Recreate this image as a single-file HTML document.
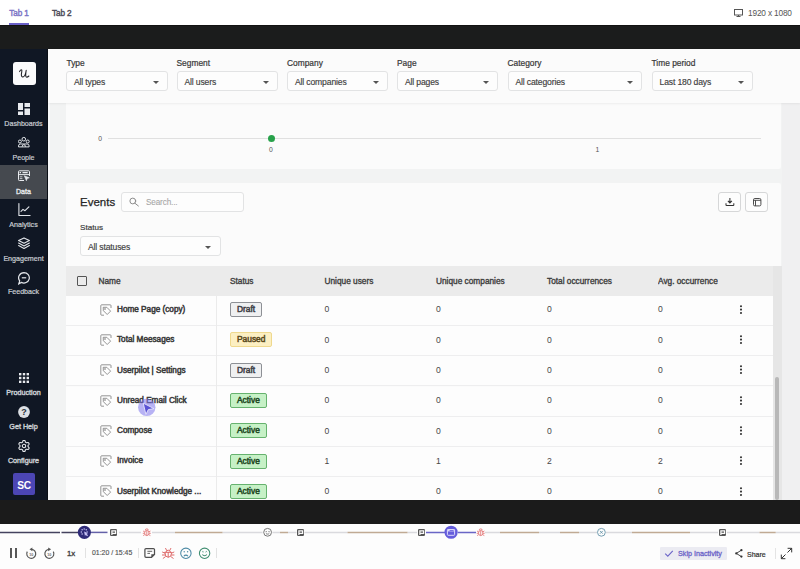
<!DOCTYPE html>
<html><head><meta charset="utf-8">
<style>
*{box-sizing:border-box}
html,body{margin:0;padding:0}
body{width:800px;height:569px;position:relative;overflow:hidden;background:#fff;font-family:"Liberation Sans",sans-serif;color:#333}
.a{position:absolute}
.t{position:absolute;white-space:nowrap;line-height:1}
.nav{position:absolute;left:0;width:47px;text-align:center;color:#c9cdd3;-webkit-text-stroke:0.2px #c9cdd3;font-size:7.1px;line-height:1;white-space:nowrap}
.lbl{position:absolute;font-size:8.4px;-webkit-text-stroke:0.2px #383838;color:#383838;line-height:1;white-space:nowrap}
.dd{position:absolute;top:71px;height:20px;border:1px solid #e2e3e4;border-radius:3px;background:#fdfdfd}
.dd span{position:absolute;left:7px;top:5.5px;font-size:8.6px;letter-spacing:-0.15px;line-height:1;color:#404040;-webkit-text-stroke:0.15px #404040;white-space:nowrap}
.dd i{position:absolute;right:8px;top:8.5px;width:0;height:0;border-left:3px solid transparent;border-right:3px solid transparent;border-top:3px solid #555}
.th{position:absolute;top:276.8px;font-size:8.3px;-webkit-text-stroke:0.35px #3d3d3d;color:#3d3d3d;line-height:1;white-space:nowrap}
.row{position:absolute;left:66px;width:706.5px;height:30.3px;border-bottom:1px solid #eeeeef;background:#fdfdfd}
.nm{position:absolute;left:51px;top:10.4px;font-size:8.2px;-webkit-text-stroke:0.5px #3a3a3a;color:#3a3a3a;line-height:1;white-space:nowrap}
.ic{position:absolute;left:34px;top:8px}
.pill{position:absolute;left:164px;top:6.5px;height:15px;border:1px solid #8d9095;border-radius:2px;background:#eff0f1;font-size:8.4px;-webkit-text-stroke:0.5px currentColor;color:#3e4146;line-height:13px;padding:0 6px;white-space:nowrap}
.pill.p{background:#fcefc2;border-color:#efd98e;color:#5b4b1d}
.pill.ac{background:#c6f1c6;border-color:#66b26e;color:#1f4a24}
.num{position:absolute;top:9.9px;font-size:8.6px;color:#474747;line-height:1}
.keb{position:absolute;left:672.7px;top:9.2px;fill:#333}
.keb b{position:absolute;left:0;width:1.7px;height:1.7px;border-radius:1px;background:#3a3a3a}
</style></head><body>

<!-- TOP BAR -->
<div class="t" style="left:9.3px;top:10px;font-size:8.2px;letter-spacing:-0.12px;-webkit-text-stroke:0.4px #7c74c6;color:#7c74c6">Tab 1</div>
<div class="a" style="left:9px;top:23px;width:20px;height:2px;background:#6a60c8"></div>
<div class="t" style="left:52px;top:10px;font-size:8.2px;letter-spacing:-0.12px;-webkit-text-stroke:0.4px #4d4b57;color:#4d4b57">Tab 2</div>
<svg class="a" style="left:734px;top:9px" width="9" height="8" viewBox="0 0 9 8"><rect x="0.5" y="0.5" width="8" height="5.5" fill="none" stroke="#555" stroke-width="1"/><path d="M4.5 6v1.3M2.5 7.5h4" stroke="#555" stroke-width="1"/></svg>
<div class="t" style="left:748px;top:9px;font-size:8.3px;letter-spacing:-0.17px;color:#555">1920 x 1080</div>

<!-- DARK BANDS -->
<div class="a" style="left:0;top:25px;width:800px;height:24px;background:#1b1c1c;border-top:1px solid #121212"></div>
<div class="a" style="left:0;top:500px;width:800px;height:24px;background:#1b1b1b"></div>

<!-- SIDEBAR -->
<div class="a" style="left:0;top:49px;width:48px;height:451px;background:#101724"></div>
<div class="a" style="left:47px;top:49px;width:1px;height:451px;background:#0b0f16"></div>
<div class="a" style="left:12.5px;top:62px;width:23px;height:23px;background:#fbfbfc;border-radius:3px"></div>
<svg class="a" style="left:18.5px;top:69px" width="11" height="10" viewBox="0 0 11 10"><path d="M.6 2.6C1.1 1.2 2 .6 2.7 1c.5.4-.1 2.4-.3 4-.2 1.8.4 3.1 1.6 2.9 1.4-.2 2.6-2.4 3.2-6.6-.3 1.9-.7 4.3-.4 5.9.3 1.2 1.4 1.3 3.1-.2" fill="none" stroke="#1f1f24" stroke-width="1.05" stroke-linecap="round" stroke-linejoin="round"/></svg>

<div class="a" style="left:0;top:165px;width:47px;height:34px;background:#45494f"></div>

<!-- dashboards icon -->
<svg class="a" style="left:18px;top:102.5px" width="12" height="12" viewBox="0 0 12 12" fill="#e8eaee"><rect x="0" y="0" width="5" height="7"/><rect x="6.5" y="0" width="5.5" height="4"/><rect x="0" y="8.5" width="5" height="3.5"/><rect x="6.5" y="5.5" width="5.5" height="6.5"/></svg>
<div class="nav" style="top:120.6px">Dashboards</div>
<!-- people -->
<svg class="a" style="left:18px;top:136px" width="12" height="12" viewBox="0 0 12 12" fill="none" stroke="#e3e6ea" stroke-width="1"><circle cx="5.8" cy="3.2" r="1.8"/><circle cx="1.9" cy="5.5" r="1.5"/><circle cx="9.7" cy="5.5" r="1.5"/><path d="M.5 10.9V9.9a1.9 1.9 0 0 1 1.9-1.9h6.8a1.9 1.9 0 0 1 1.9 1.9v1z"/><path d="M4.2 10.9v-.6a1.6 1.6 0 0 1 3.2 0v.6"/></svg>
<div class="nav" style="top:154.6px">People</div>
<!-- data -->
<svg class="a" style="left:18px;top:170px" width="12" height="12" viewBox="0 0 12 12" fill="none" stroke="#e8eaee" stroke-width="1"><path d="M6 10.5H1.3a.8.8 0 0 1-.8-.8V1.6a.8.8 0 0 1 .8-.8h9.4a.8.8 0 0 1 .8.8V6"/><path d="M.5 4.6h11"/><path d="M1.6 2.7h1.4M4.5 2.7h5.2" stroke-width="1.3"/><path d="M1.8 6.8h2.6M1.8 8.6h2.6" stroke-width=".8"/><path d="M6.3 5.8l5 2-2.1.8-.8 2.1z" fill="#e8eaee" stroke-width=".6"/></svg>
<div class="nav" style="top:188.5px;color:#e6e8eb;-webkit-text-stroke:0.35px #e6e8eb">Data</div>
<!-- analytics -->
<svg class="a" style="left:17.5px;top:203px" width="13" height="13" viewBox="0 0 13 13" fill="none" stroke="#e3e6ea" stroke-width="1.1" stroke-linecap="round" stroke-linejoin="round"><path d="M.9 .6v11.9h11.2"/><path d="M3 8.3l2-1.9 2 1.3 3.9-3.8"/></svg>
<div class="nav" style="top:221.8px">Analytics</div>
<!-- engagement -->
<svg class="a" style="left:18px;top:237.3px" width="12" height="12" viewBox="0 0 12 12" fill="none" stroke="#e3e6ea" stroke-width="1.1" stroke-linejoin="round" stroke-linecap="round"><path d="M6 .9L11.4 3.6 6 6.3.6 3.6z"/><path d="M.6 6L6 8.9 11.4 6"/><path d="M.6 8.5L6 11.4l5.4-2.9"/></svg>
<div class="nav" style="top:255.5px">Engagement</div>
<!-- feedback -->
<svg class="a" style="left:18px;top:271.5px" width="12" height="13" viewBox="0 0 12 13" fill="none" stroke="#e3e6ea" stroke-width="1.2"><path d="M6 .6a5.4 5.2 0 1 1-2.6 9.8L.8 11.8l.9-2.9A5.4 5.2 0 0 1 6 .6z"/><path d="M3.8 5.8h4.4"/></svg>
<div class="nav" style="top:288.9px">Feedback</div>

<!-- production -->
<svg class="a" style="left:19px;top:373px" width="10" height="10" viewBox="0 0 10 10" fill="#e8eaee"><rect x="0" y="0" width="2.4" height="2.4"/><rect x="3.8" y="0" width="2.4" height="2.4"/><rect x="7.6" y="0" width="2.4" height="2.4"/><rect x="0" y="3.8" width="2.4" height="2.4"/><rect x="3.8" y="3.8" width="2.4" height="2.4"/><rect x="7.6" y="3.8" width="2.4" height="2.4"/><rect x="0" y="7.6" width="2.4" height="2.4"/><rect x="3.8" y="7.6" width="2.4" height="2.4"/><rect x="7.6" y="7.6" width="2.4" height="2.4"/></svg>
<div class="nav" style="top:389.1px;-webkit-text-stroke:0.4px #c9cdd3;font-size:7.2px">Production</div>
<!-- help -->
<svg class="a" style="left:17.8px;top:406.2px" width="12" height="12" viewBox="0 0 12 12"><circle cx="6" cy="6" r="5.9" fill="#dcdfe4"/><text x="6" y="9.3" text-anchor="middle" font-family="Liberation Sans" font-weight="bold" font-size="9" fill="#2a2f38">?</text></svg>
<div class="nav" style="top:422.8px;-webkit-text-stroke:0.4px #c9cdd3;font-size:7.2px">Get Help</div>
<!-- configure -->
<svg class="a" style="left:18px;top:439.6px" width="12" height="12" viewBox="0 0 12 12" fill="none" stroke="#e3e6ea" stroke-width="1.1" stroke-linejoin="round"><path d="M6.00 0.43 L6.19 0.43 L6.39 0.45 L6.58 0.49 L6.77 0.56 L6.94 0.67 L7.09 0.87 L7.20 1.18 L7.28 1.54 L7.35 1.85 L7.43 2.06 L7.54 2.20 L7.65 2.29 L7.77 2.37 L7.89 2.44 L8.01 2.51 L8.14 2.58 L8.26 2.65 L8.39 2.71 L8.53 2.77 L8.69 2.79 L8.92 2.76 L9.22 2.67 L9.57 2.55 L9.89 2.49 L10.14 2.52 L10.33 2.62 L10.48 2.74 L10.61 2.89 L10.72 3.05 L10.82 3.21 L10.92 3.39 L11.00 3.56 L11.06 3.75 L11.10 3.94 L11.08 4.15 L10.98 4.38 L10.77 4.63 L10.50 4.88 L10.26 5.09 L10.13 5.27 L10.06 5.43 L10.04 5.58 L10.03 5.72 L10.03 5.86 L10.03 6.00 L10.03 6.14 L10.03 6.28 L10.04 6.42 L10.06 6.57 L10.13 6.73 L10.26 6.91 L10.50 7.12 L10.77 7.37 L10.98 7.62 L11.08 7.85 L11.10 8.06 L11.06 8.25 L11.00 8.44 L10.92 8.61 L10.82 8.79 L10.72 8.95 L10.61 9.11 L10.48 9.26 L10.33 9.38 L10.14 9.48 L9.89 9.51 L9.57 9.45 L9.22 9.33 L8.92 9.24 L8.69 9.21 L8.53 9.23 L8.39 9.29 L8.26 9.35 L8.14 9.42 L8.01 9.49 L7.89 9.56 L7.77 9.63 L7.65 9.71 L7.54 9.80 L7.43 9.94 L7.35 10.15 L7.28 10.46 L7.20 10.82 L7.09 11.13 L6.94 11.33 L6.77 11.44 L6.58 11.51 L6.39 11.55 L6.19 11.57 L6.00 11.57 L5.81 11.57 L5.61 11.55 L5.42 11.51 L5.23 11.44 L5.06 11.33 L4.91 11.13 L4.80 10.82 L4.72 10.46 L4.65 10.15 L4.57 9.94 L4.46 9.80 L4.35 9.71 L4.23 9.63 L4.11 9.56 L3.99 9.49 L3.86 9.42 L3.74 9.35 L3.61 9.29 L3.47 9.23 L3.31 9.21 L3.08 9.24 L2.78 9.33 L2.43 9.45 L2.11 9.51 L1.86 9.48 L1.67 9.38 L1.52 9.26 L1.39 9.11 L1.28 8.95 L1.18 8.79 L1.08 8.61 L1.00 8.44 L0.94 8.25 L0.90 8.06 L0.92 7.85 L1.02 7.62 L1.23 7.37 L1.50 7.12 L1.74 6.91 L1.87 6.73 L1.94 6.57 L1.96 6.42 L1.97 6.28 L1.97 6.14 L1.97 6.00 L1.97 5.86 L1.97 5.72 L1.96 5.58 L1.94 5.43 L1.87 5.27 L1.74 5.09 L1.50 4.88 L1.23 4.63 L1.02 4.38 L0.92 4.15 L0.90 3.94 L0.94 3.75 L1.00 3.56 L1.08 3.39 L1.18 3.21 L1.28 3.05 L1.39 2.89 L1.52 2.74 L1.67 2.62 L1.86 2.52 L2.11 2.49 L2.43 2.55 L2.78 2.67 L3.08 2.76 L3.31 2.79 L3.47 2.77 L3.61 2.71 L3.74 2.65 L3.86 2.58 L3.99 2.51 L4.11 2.44 L4.23 2.37 L4.35 2.29 L4.46 2.20 L4.57 2.06 L4.65 1.85 L4.72 1.54 L4.80 1.18 L4.91 0.87 L5.06 0.67 L5.23 0.56 L5.42 0.49 L5.61 0.45 L5.81 0.43Z"/><circle cx="6" cy="6" r="1.7"/></svg>
<div class="nav" style="top:456.6px;-webkit-text-stroke:0.4px #c9cdd3;font-size:7.2px">Configure</div>
<!-- avatar -->
<div class="a" style="left:12.8px;top:472.8px;width:22.4px;height:22.4px;background:#4c46b4;border-radius:2px"></div>
<div class="t" style="left:12.8px;top:480.6px;width:22.4px;text-align:center;font-size:10.2px;letter-spacing:-0.4px;font-weight:bold;color:#fff">SC</div>

<!-- CONTENT -->
<div class="a" style="left:48px;top:49px;width:752px;height:451px;background:#f2f3f3"></div>
<div class="a" style="left:48px;top:102px;width:2px;height:398px;background:#f8f9fa"></div>
<div class="a" style="left:782px;top:102px;width:18px;height:398px;background:#f0f0f1"></div>

<!-- chart card -->
<div class="a" style="left:66px;top:95px;width:715px;height:74px;background:#fbfbfb;border-radius:2px"></div>
<div class="t" style="left:98.3px;top:135.6px;font-size:6.8px;color:#555">0</div>
<div class="a" style="left:107.8px;top:138px;width:653.2px;height:1px;background:#e0e0e0"></div>
<div class="a" style="left:267.5px;top:134.5px;width:7px;height:7px;border-radius:50%;background:#27a14a"></div>
<div class="t" style="left:269px;top:146.8px;font-size:6.8px;color:#555">0</div>
<div class="t" style="left:595.5px;top:146.8px;font-size:6.8px;color:#555">1</div>

<!-- filter bar -->
<div class="a" style="left:48px;top:49px;width:752px;height:53.5px;background:#fbfbfb;box-shadow:0 1px 2px rgba(0,0,0,0.06)"></div>
<div class="lbl" style="left:66.5px;top:59px">Type</div>
<div class="lbl" style="left:176.5px;top:59px">Segment</div>
<div class="lbl" style="left:287px;top:59px">Company</div>
<div class="lbl" style="left:397px;top:59px">Page</div>
<div class="lbl" style="left:507.5px;top:59px">Category</div>
<div class="lbl" style="left:651.5px;top:59px">Time period</div>
<div class="dd" style="left:66px;width:102px"><span>All types</span><i></i></div>
<div class="dd" style="left:176.5px;width:101.5px"><span>All users</span><i></i></div>
<div class="dd" style="left:287px;width:101px"><span>All companies</span><i></i></div>
<div class="dd" style="left:397px;width:101px"><span>All pages</span><i></i></div>
<div class="dd" style="left:507.5px;width:134px"><span>All categories</span><i></i></div>
<div class="dd" style="left:651.5px;width:101px"><span>Last 180 days</span><i></i></div>

<!-- events card -->
<div class="a" style="left:66px;top:182.5px;width:715px;height:317.5px;background:#fbfbfb;border-radius:2px"></div>
<div class="t" style="left:80px;top:197px;font-size:11.5px;color:#262626;-webkit-text-stroke:0.25px #262626">Events</div>
<div class="a" style="left:120.5px;top:192px;width:123.5px;height:19.5px;border:1px solid #e2e3e4;border-radius:3px;background:#fdfdfd"></div>
<svg class="a" style="left:129px;top:197px" width="11" height="11" viewBox="0 0 11 11" fill="none" stroke="#8c8c8c" stroke-width="1" stroke-linecap="round"><circle cx="3.8" cy="4" r="2.9"/><path d="M5.9 6.2L9.4 9"/></svg>
<div class="t" style="left:146px;top:199.2px;font-size:8.2px;letter-spacing:-0.15px;color:#a8a8a8;-webkit-text-stroke:0.1px #a8a8a8">Search...</div>
<div class="a" style="left:718px;top:192px;width:22.8px;height:19.5px;border:1px solid #d6d7d8;border-radius:3px;background:#fdfdfd"></div>
<svg class="a" style="left:724.5px;top:197px" width="10" height="10" viewBox="0 0 10 10" fill="none" stroke="#333" stroke-width="1.05"><path d="M4.9 .9v5M2.9 3.9l2 2 2-2M1 6.3v1.6a.6.6 0 0 0 .6.6h6.6a.6.6 0 0 0 .6-.6V6.3"/></svg>
<div class="a" style="left:745.3px;top:192px;width:22.5px;height:19.5px;border:1px solid #d6d7d8;border-radius:3px;background:#fdfdfd"></div>
<svg class="a" style="left:752.5px;top:197.7px" width="9" height="9" viewBox="0 0 9 9" fill="none" stroke="#444" stroke-width=".95"><rect x=".5" y=".5" width="7.4" height="7.4" rx="1.3"/><path d="M.5 2.3h7.4M2.5 2.3v5.6"/></svg>
<div class="lbl" style="left:80px;top:224.4px;font-size:8.1px;-webkit-text-stroke:0.2px #3d3d3d;color:#3d3d3d">Status</div>
<div class="dd" style="left:80px;top:235.8px;width:140.5px"><span style="top:6.2px">All statuses</span><i style="top:9px;right:9px"></i></div>

<!-- table -->
<div class="a" style="left:66px;top:265.5px;width:706.5px;height:30px;background:#ebebeb"></div>
<div class="a" style="left:772.5px;top:265.5px;width:9.5px;height:234.5px;background:#e6e6e6"></div>
<div class="a" style="left:775px;top:377px;width:4px;height:123px;background:#b8b8b8;border-radius:2px"></div>
<div class="a" style="left:77px;top:276px;width:10px;height:10px;border:1.3px solid #555;border-radius:1px"></div>
<div class="th" style="left:98.5px">Name</div>
<div class="th" style="left:230px">Status</div>
<div class="th" style="left:324.5px">Unique users</div>
<div class="th" style="left:436px">Unique companies</div>
<div class="th" style="left:547px">Total occurrences</div>
<div class="a" style="left:658px;top:270px;width:60px;height:20px;overflow:hidden"><div class="th" style="left:0;top:7px">Avg. occurrence</div></div>

<div id="rows">
<div class="row" style="top:295.60px"><svg class="ic" width="12" height="12" viewBox="0 0 12 12" fill="none" stroke="#7a7a7a" stroke-width="0.8"><path d="M4 11.2H1.6a.8.8 0 0 1-.8-.8V1.6a.8.8 0 0 1 .8-.8h8.6a.8.8 0 0 1 .8.8V4"/><path d="M3.2 3.3h3.6l3.8 3.8-3.4 3.4-3.8-3.8z"/><circle cx="5" cy="5" r=".5"/></svg><div class="nm">Home Page (copy)</div><div class="pill ">Draft</div><div class="num" style="left:258.5px">0</div><div class="num" style="left:370px">0</div><div class="num" style="left:481px">0</div><div class="num" style="left:592px">0</div><svg class="keb" width="4" height="10" viewBox="0 0 4 10"><circle cx="2" cy="1.2" r="1.05"/><circle cx="2" cy="4.6" r="1.05"/><circle cx="2" cy="8" r="1.05"/></svg></div>
<div class="row" style="top:325.90px"><svg class="ic" width="12" height="12" viewBox="0 0 12 12" fill="none" stroke="#7a7a7a" stroke-width="0.8"><path d="M4 11.2H1.6a.8.8 0 0 1-.8-.8V1.6a.8.8 0 0 1 .8-.8h8.6a.8.8 0 0 1 .8.8V4"/><path d="M3.2 3.3h3.6l3.8 3.8-3.4 3.4-3.8-3.8z"/><circle cx="5" cy="5" r=".5"/></svg><div class="nm">Total Meesages</div><div class="pill p">Paused</div><div class="num" style="left:258.5px">0</div><div class="num" style="left:370px">0</div><div class="num" style="left:481px">0</div><div class="num" style="left:592px">0</div><svg class="keb" width="4" height="10" viewBox="0 0 4 10"><circle cx="2" cy="1.2" r="1.05"/><circle cx="2" cy="4.6" r="1.05"/><circle cx="2" cy="8" r="1.05"/></svg></div>
<div class="row" style="top:356.20px"><svg class="ic" width="12" height="12" viewBox="0 0 12 12" fill="none" stroke="#7a7a7a" stroke-width="0.8"><path d="M4 11.2H1.6a.8.8 0 0 1-.8-.8V1.6a.8.8 0 0 1 .8-.8h8.6a.8.8 0 0 1 .8.8V4"/><path d="M3.2 3.3h3.6l3.8 3.8-3.4 3.4-3.8-3.8z"/><circle cx="5" cy="5" r=".5"/></svg><div class="nm">Userpilot | Settings</div><div class="pill ">Draft</div><div class="num" style="left:258.5px">0</div><div class="num" style="left:370px">0</div><div class="num" style="left:481px">0</div><div class="num" style="left:592px">0</div><svg class="keb" width="4" height="10" viewBox="0 0 4 10"><circle cx="2" cy="1.2" r="1.05"/><circle cx="2" cy="4.6" r="1.05"/><circle cx="2" cy="8" r="1.05"/></svg></div>
<div class="row" style="top:386.50px"><svg class="ic" width="12" height="12" viewBox="0 0 12 12" fill="none" stroke="#7a7a7a" stroke-width="0.8"><path d="M4 11.2H1.6a.8.8 0 0 1-.8-.8V1.6a.8.8 0 0 1 .8-.8h8.6a.8.8 0 0 1 .8.8V4"/><path d="M3.2 3.3h3.6l3.8 3.8-3.4 3.4-3.8-3.8z"/><circle cx="5" cy="5" r=".5"/></svg><div class="nm">Unread Email Click</div><div class="pill ac">Active</div><div class="num" style="left:258.5px">0</div><div class="num" style="left:370px">0</div><div class="num" style="left:481px">0</div><div class="num" style="left:592px">0</div><svg class="keb" width="4" height="10" viewBox="0 0 4 10"><circle cx="2" cy="1.2" r="1.05"/><circle cx="2" cy="4.6" r="1.05"/><circle cx="2" cy="8" r="1.05"/></svg></div>
<div class="row" style="top:416.80px"><svg class="ic" width="12" height="12" viewBox="0 0 12 12" fill="none" stroke="#7a7a7a" stroke-width="0.8"><path d="M4 11.2H1.6a.8.8 0 0 1-.8-.8V1.6a.8.8 0 0 1 .8-.8h8.6a.8.8 0 0 1 .8.8V4"/><path d="M3.2 3.3h3.6l3.8 3.8-3.4 3.4-3.8-3.8z"/><circle cx="5" cy="5" r=".5"/></svg><div class="nm">Compose</div><div class="pill ac">Active</div><div class="num" style="left:258.5px">0</div><div class="num" style="left:370px">0</div><div class="num" style="left:481px">0</div><div class="num" style="left:592px">0</div><svg class="keb" width="4" height="10" viewBox="0 0 4 10"><circle cx="2" cy="1.2" r="1.05"/><circle cx="2" cy="4.6" r="1.05"/><circle cx="2" cy="8" r="1.05"/></svg></div>
<div class="row" style="top:447.10px"><svg class="ic" width="12" height="12" viewBox="0 0 12 12" fill="none" stroke="#7a7a7a" stroke-width="0.8"><path d="M4 11.2H1.6a.8.8 0 0 1-.8-.8V1.6a.8.8 0 0 1 .8-.8h8.6a.8.8 0 0 1 .8.8V4"/><path d="M3.2 3.3h3.6l3.8 3.8-3.4 3.4-3.8-3.8z"/><circle cx="5" cy="5" r=".5"/></svg><div class="nm">Invoice</div><div class="pill ac">Active</div><div class="num" style="left:258.5px">1</div><div class="num" style="left:370px">1</div><div class="num" style="left:481px">2</div><div class="num" style="left:592px">2</div><svg class="keb" width="4" height="10" viewBox="0 0 4 10"><circle cx="2" cy="1.2" r="1.05"/><circle cx="2" cy="4.6" r="1.05"/><circle cx="2" cy="8" r="1.05"/></svg></div>
<div class="row" style="top:477.40px"><svg class="ic" width="12" height="12" viewBox="0 0 12 12" fill="none" stroke="#7a7a7a" stroke-width="0.8"><path d="M4 11.2H1.6a.8.8 0 0 1-.8-.8V1.6a.8.8 0 0 1 .8-.8h8.6a.8.8 0 0 1 .8.8V4"/><path d="M3.2 3.3h3.6l3.8 3.8-3.4 3.4-3.8-3.8z"/><circle cx="5" cy="5" r=".5"/></svg><div class="nm">Userpilot Knowledge ...</div><div class="pill ac">Active</div><div class="num" style="left:258.5px">0</div><div class="num" style="left:370px">0</div><div class="num" style="left:481px">0</div><div class="num" style="left:592px">0</div><svg class="keb" width="4" height="10" viewBox="0 0 4 10"><circle cx="2" cy="1.2" r="1.05"/><circle cx="2" cy="4.6" r="1.05"/><circle cx="2" cy="8" r="1.05"/></svg></div>
<div class="a" style="left:216px;top:295.5px;width:1px;height:205px;background:#ebebeb"></div>
</div>


<!-- CURSOR -->
<svg class="a" style="left:136px;top:397px" width="22" height="22" viewBox="136 397 22 22">
 <circle cx="146.75" cy="407.3" r="8.7" fill="rgba(126,116,236,0.55)"/>
 <path d="M143.2 403.1L154 408.6 148.3 409.6 145.9 414.4z" fill="#5a52d4" stroke="#e8e6fb" stroke-width="0.9" stroke-linejoin="round"/>
</svg>
<!-- TIMELINE -->
<div class="a" style="left:0;top:500px;width:800px;height:24px;background:#1b1b1b"></div>
<div class="a" style="left:0;top:524px;width:800px;height:45px;background:#fdfdfd"></div>
<svg class="a" style="left:0;top:524px" width="800" height="18" viewBox="0 524 800 18">
 <g stroke-width="1.5" fill="none">
  <path d="M0 532.4H60M61.5 532.4H78" stroke="#45435f"/>
  <path d="M91 532.4H107.5" stroke="#6461a8"/>
  <path d="M119 532.4H141M152 532.4H175M222.5 532.4H262.5M272.5 532.4H280M288 532.4H296.5M304.5 532.4H347.5M407.5 532.4H417M485 532.4H500M539 532.4H560M579 532.4H597M606 532.4H632M690 532.4H718M727 532.4H759.5M775.7 532.4H800" stroke="#dadade"/>
  <path d="M175 532.4H222.5M280 532.4H288M347.5 532.4H407.5M500 532.4H539M560 532.4H579M632 532.4H690M759.5 532.4H775.7" stroke="#c0aa94"/>
  <path d="M426 532.4H445M458 532.4H476" stroke="#6a66c6"/>
 </g>
 <!-- click marker -->
 <circle cx="84.4" cy="532.3" r="6.6" fill="#2e2a78"/>
 <g fill="#c9c4f6"><circle cx="84.20" cy="529.00" r=".75"/><circle cx="82.15" cy="529.85" r=".75"/><circle cx="81.30" cy="531.90" r=".75"/><circle cx="82.15" cy="533.95" r=".75"/><circle cx="86.25" cy="529.85" r=".75"/><circle cx="87.10" cy="531.90" r=".75"/><path d="M84.1 531.6l3.9 1.6-1.5.6 1.5 1.5-.9.9-1.5-1.5-.6 1.5z"/></g>
 <!-- browser marker -->
 <circle cx="451.1" cy="532.25" r="6.6" fill="#645cdc"/>
 <rect x="447.4" y="529.5" width="7.2" height="5.8" rx=".7" fill="none" stroke="#dcd9fa" stroke-width="1"/>
 <rect x="447.4" y="529.5" width="7.2" height="1.9" fill="#dcd9fa"/>
 <rect x="449.6" y="530.1" width="4" height=".8" fill="#6057d8"/>
 <!-- notes -->
 <g id="note">
  <rect x="110" y="528.9" width="7" height="7" rx="1.2" fill="#555"/>
  <path d="M111.9 535.1V530.8h3.7v2.5h-3.7" fill="none" stroke="#fafafa" stroke-width="1.25"/>
 </g>
 <use href="#note" x="187"/>
 <use href="#note" x="308"/>
 <use href="#note" x="609"/>
 <!-- bugs -->
 <g id="bug" fill="none" stroke="#e06a6a" stroke-width=".8">
  <ellipse cx="146.8" cy="533" rx="2.2" ry="2.6"/>
  <path d="M145.2 530.3a1.6 1.4 0 0 1 3.2 0"/>
  <path d="M144.6 531.8l-1.5-.8M144.5 533.3h-1.7M144.7 534.7l-1.5.9M149 531.8l1.5-.8M149.1 533.3h1.7M148.9 534.7l1.5.9M146.8 530.8v4.6"/>
 </g>
 <use href="#bug" x="333.9"/>
 <!-- smiley -->
 <g fill="none" stroke="#6a6a6a" stroke-width=".9">
  <circle cx="267.6" cy="532.3" r="3.9"/>
  <path d="M266.2 531v1.2M269 531v1.2M265.9 533.3c.8 1.1 2.6 1.1 3.4 0"/>
 </g>
 <!-- sad -->
 <g fill="none" stroke="#6593a8" stroke-width=".9">
  <circle cx="601.4" cy="532.3" r="3.9"/>
  <path d="M600 530.9l2.8 2.8M602.8 530.9l-2.8 2.8"/>
 </g>
</svg>

<!-- CONTROLS -->
<div class="a" style="left:10px;top:548.4px;width:1.5px;height:9.8px;background:#585858"></div>
<div class="a" style="left:15px;top:548.4px;width:1.5px;height:9.8px;background:#585858"></div>
<svg class="a" style="left:24px;top:546px" width="32" height="14" viewBox="24 546 32 14">
 <g fill="none" stroke="#555" stroke-width="1.2">
  <path d="M31.3 549.3A4.5 4.5 0 1 1 27.3 551.6"/>
  <path d="M49.3 549.3A4.5 4.5 0 1 0 53.3 551.6"/>
 </g>
 <path d="M32.4 547.4l-2.9 1.9 2.9 1.9z" fill="#555"/>
 <path d="M48.2 547.4l2.9 1.9-2.9 1.9z" fill="#555"/>
 <text x="31.3" y="555.5" font-family="Liberation Sans" font-weight="bold" font-size="3.7" fill="#6a6a6a" text-anchor="middle">10</text>
 <text x="49.3" y="555.5" font-family="Liberation Sans" font-weight="bold" font-size="3.7" fill="#6a6a6a" text-anchor="middle">10</text>
</svg>
<div class="t" style="left:67px;top:549.6px;font-size:7.8px;-webkit-text-stroke:0.35px #444;color:#444">1x</div>
<div class="a" style="left:85px;top:548px;width:1px;height:10px;background:#e2e2e2"></div>
<div class="t" style="left:92px;top:550.3px;font-size:6.9px;color:#555;-webkit-text-stroke:0.15px #555">01:20 / 15:45</div>
<div class="a" style="left:138px;top:548px;width:1px;height:10px;background:#e2e2e2"></div>
<svg class="a" style="left:143px;top:546px" width="80" height="14" viewBox="143 546 80 14">
 <g fill="none" stroke="#505050" stroke-width="1.25">
  <path d="M144.9 549.6a1.1 1.1 0 0 1 1.1-1.1h7.4a1.1 1.1 0 0 1 1.1 1.1v4.8l-3 3h-5.5a1.1 1.1 0 0 1-1.1-1.1z"/>
 </g>
 <path d="M147.4 551.3h4.8M147.4 553.4h2.6" stroke="#505050" stroke-width=".9"/>
 <path d="M154.7 554.2l-3.4 3.4v-3.4z" fill="#505050"/>
 <g fill="none" stroke="#dc6464" stroke-width=".95" stroke-linecap="round">
  <path d="M165 553.6a3.2 3.6 0 0 0 6.4 0v-1.3h-6.4z"/>
  <path d="M165.9 552.3a2.3 2.1 0 0 1 4.6 0"/>
  <path d="M168.2 552.4v4.7"/>
  <path d="M165 553.2l-2.5-1.1M164.9 555h-2.5M165.4 556.7l-2.2 1.6M171.4 553.2l2.5-1.1M171.5 555h2.5M171 556.7l2.2 1.6M166.6 550.3l-1-1.9M169.8 550.3l1-1.9"/>
 </g>
 <g fill="none" stroke="#4b89a4" stroke-width="1.05">
  <circle cx="185.9" cy="553.3" r="5.2"/>
  <path d="M183.8 556.3c1.2-1.6 3-1.6 4.2 0"/>
 </g>
 <circle cx="184.2" cy="551.8" r=".7" fill="#4b89a4"/><circle cx="187.6" cy="551.8" r=".7" fill="#4b89a4"/>
 <g fill="none" stroke="#3f8d70" stroke-width="1.05">
  <circle cx="204.6" cy="553.3" r="5.2"/>
  <path d="M202.4 554.5c1.2 1.6 3.2 1.6 4.4 0"/>
  <path d="M202.1 552.1l.8-.7.8.7M205.5 552.1l.8-.7.8.7" stroke-width=".8"/>
 </g>
</svg>
<div class="a" style="left:216px;top:548px;width:1px;height:10px;background:#e2e2e2"></div>

<div class="a" style="left:660px;top:547px;width:67px;height:12.7px;background:#ebebf2;border-radius:1px"></div>
<svg class="a" style="left:664px;top:549px" width="10" height="9" viewBox="0 0 10 9"><path d="M1.2 4.6l2.6 2.5L8.8 1.8" fill="none" stroke="#6b64c8" stroke-width="1.1"/></svg>
<div class="t" style="left:678px;top:550px;font-size:7.2px;color:#6b64c8;-webkit-text-stroke:0.3px #6b64c8">Skip Inactivity</div>
<svg class="a" style="left:734px;top:548px" width="10" height="11" viewBox="0 0 10 11"><g fill="#333"><circle cx="7.4" cy="2.2" r="1.15"/><circle cx="2.3" cy="5.4" r="1.15"/><circle cx="7.4" cy="8.6" r="1.15"/></g><path d="M7.4 2.2L2.3 5.4 7.4 8.6" fill="none" stroke="#333" stroke-width=".9"/></svg>
<div class="t" style="left:747px;top:550.8px;font-size:7px;color:#333;-webkit-text-stroke:0.2px #333">Share</div>
<div class="a" style="left:775px;top:547.5px;width:1px;height:11px;background:#e4e4e4"></div>
<svg class="a" style="left:780px;top:547px" width="13" height="13" viewBox="0 0 13 13" fill="none" stroke="#333" stroke-width="1"><path d="M7.6 1.3h4.1v4.1M11.7 1.3L7.5 5.5M5.4 11.7H1.3V7.6M1.3 11.7l4.2-4.2"/></svg>

</body></html>
